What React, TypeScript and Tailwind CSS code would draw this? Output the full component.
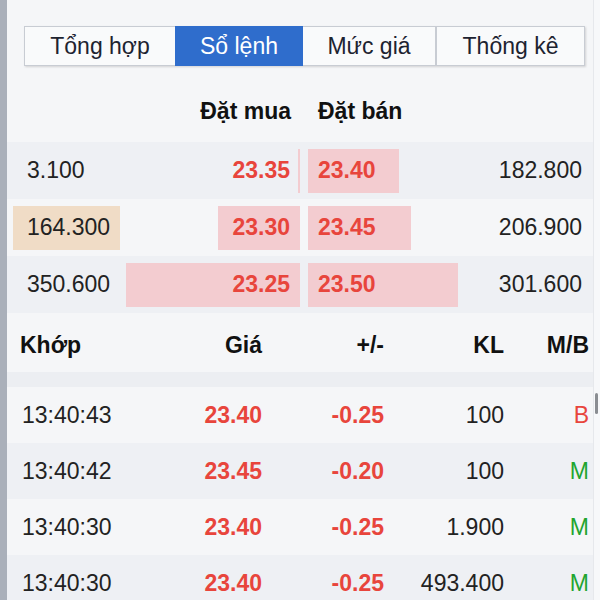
import React from "react";

const tabs = ["Tổng hợp", "Sổ lệnh", "Mức giá", "Thống kê"];

const book = [
  { bidVol: "3.100", bid: "23.35", ask: "23.40", askVol: "182.800", bidN: 3.1, askN: 182.8, hl: false },
  { bidVol: "164.300", bid: "23.30", ask: "23.45", askVol: "206.900", bidN: 164.3, askN: 206.9, hl: true },
  { bidVol: "350.600", bid: "23.25", ask: "23.50", askVol: "301.600", bidN: 350.6, askN: 301.6, hl: false },
];

const trades = [
  { time: "13:40:43", price: "23.40", chg: "-0.25", vol: "100", side: "B" },
  { time: "13:40:42", price: "23.45", chg: "-0.20", vol: "100", side: "M" },
  { time: "13:40:30", price: "23.40", chg: "-0.25", vol: "1.900", side: "M" },
  { time: "13:40:30", price: "23.40", chg: "-0.25", vol: "493.400", side: "M" },
];

const MAX_VOL = 350.6;
const BAR_W = 174;

export default function App() {
  return (
    <div className="flex h-[600px] w-[600px] overflow-hidden bg-[#f5f6f8] font-['Liberation_Sans',Arial,sans-serif] text-[#222]">
      {/* left rail */}
      <div className="w-[7px] shrink-0 bg-[#aab0ba]" />

      <div className="flex min-w-0 flex-1 flex-col">
        {/* Tabs */}
        <div className="mt-[26px] ml-[17px] mr-[8px] flex h-[40px] shrink-0 shadow-[1px_1px_2px_rgba(0,0,0,0.15)]">
          {tabs.map((t, i) => {
            const active = i === 1;
            const widths = ["w-[151px]", "w-[128px]", "w-[133px]", "w-[149px]"];
            return (
              <div
                key={t}
                className={`${widths[i]} flex items-center justify-center text-[23px] ${
                  active
                    ? "bg-[#2f6dcc] text-white"
                    : "border-y border-[#c8ccd3] bg-[#f9fafb] text-[#1d2330]"
                } ${i === 0 ? "border-l" : ""} ${i === 3 ? "border-x" : ""} ${i === 2 ? "border-r" : ""}`}
              >
                {t}
              </div>
            );
          })}
        </div>

        {/* Order book header */}
        <div className="flex h-[76px] shrink-0 items-start pt-[32px] text-[23px] font-bold leading-[27px] text-[#111]">
          <div className="w-[293px] pr-[9px] text-right">Đặt mua</div>
          <div className="pl-[18px]">Đặt bán</div>
        </div>

        {/* Order book rows */}
        {book.map((r, i) => (
          <div
            key={r.bid}
            className={`flex h-[57px] shrink-0 items-center text-[23px] ${i % 2 === 0 ? "bg-[#eef0f4]" : "bg-[#f5f6f8]"}`}
          >
            <div
              className={`ml-[6px] flex h-[44px] w-[107px] items-center pl-[14px] ${r.hl ? "bg-[#f0dcc6]" : ""}`}
            >
              {r.bidVol}
            </div>
            <div className="relative ml-[6px] flex h-[44px] w-[174px] items-center justify-end pr-[10px]">
              <div
                className="absolute inset-y-0 right-0 bg-[#f3ccd0]"
                style={{ width: `${(r.bidN / MAX_VOL) * BAR_W}px` }}
              />
              <span className="relative font-bold text-[#e8453c]">{r.bid}</span>
            </div>
            <div className="relative ml-[8px] flex h-[44px] w-[174px] items-center pl-[10px]">
              <div
                className="absolute inset-y-0 left-0 bg-[#f3ccd0]"
                style={{ width: `${(r.askN / MAX_VOL) * BAR_W}px` }}
              />
              <span className="relative font-bold text-[#e8453c]">{r.ask}</span>
            </div>
            <div className="flex-1 pr-[11px] text-right">{r.askVol}</div>
          </div>
        ))}

        {/* Trades header */}
        <div className="flex h-[59px] shrink-0 items-start pt-[19px] text-[23px] font-bold leading-[27px] text-[#111]">
          <div className="w-[163px] pl-[13px]">Khớp</div>
          <div className="w-[92px] text-right">Giá</div>
          <div className="w-[122px] text-right">+/-</div>
          <div className="w-[120px] text-right">KL</div>
          <div className="w-[85px] text-right">M/B</div>
        </div>
        <div className="h-[15px] shrink-0 bg-[#eceef2]" />

        {/* Trades rows */}
        {trades.map((t, i) => (
          <div
            key={i}
            className={`flex h-[56px] shrink-0 items-center text-[23px] ${i % 2 === 0 ? "bg-[#f5f6f8]" : "bg-[#eef0f4]"}`}
          >
            <div className="w-[163px] pl-[15px]">{t.time}</div>
            <div className="w-[92px] text-right font-bold text-[#e8453c]">{t.price}</div>
            <div className="w-[122px] text-right font-bold text-[#e8453c]">{t.chg}</div>
            <div className="w-[120px] text-right">{t.vol}</div>
            <div className={`w-[85px] text-right ${t.side === "B" ? "text-[#e8453c]" : "text-[#1fa52f]"}`}>
              {t.side}
            </div>
          </div>
        ))}
      </div>

      {/* scrollbar */}
      <div className="flex w-[7px] shrink-0 flex-col border-l border-[#e6e8ec] bg-[#f7f8fa]">
        <div className="mt-[393px] ml-[1px] h-[21px] w-[3px] shrink-0 rounded-full bg-[#8a8d92]" />
      </div>
    </div>
  );
}
